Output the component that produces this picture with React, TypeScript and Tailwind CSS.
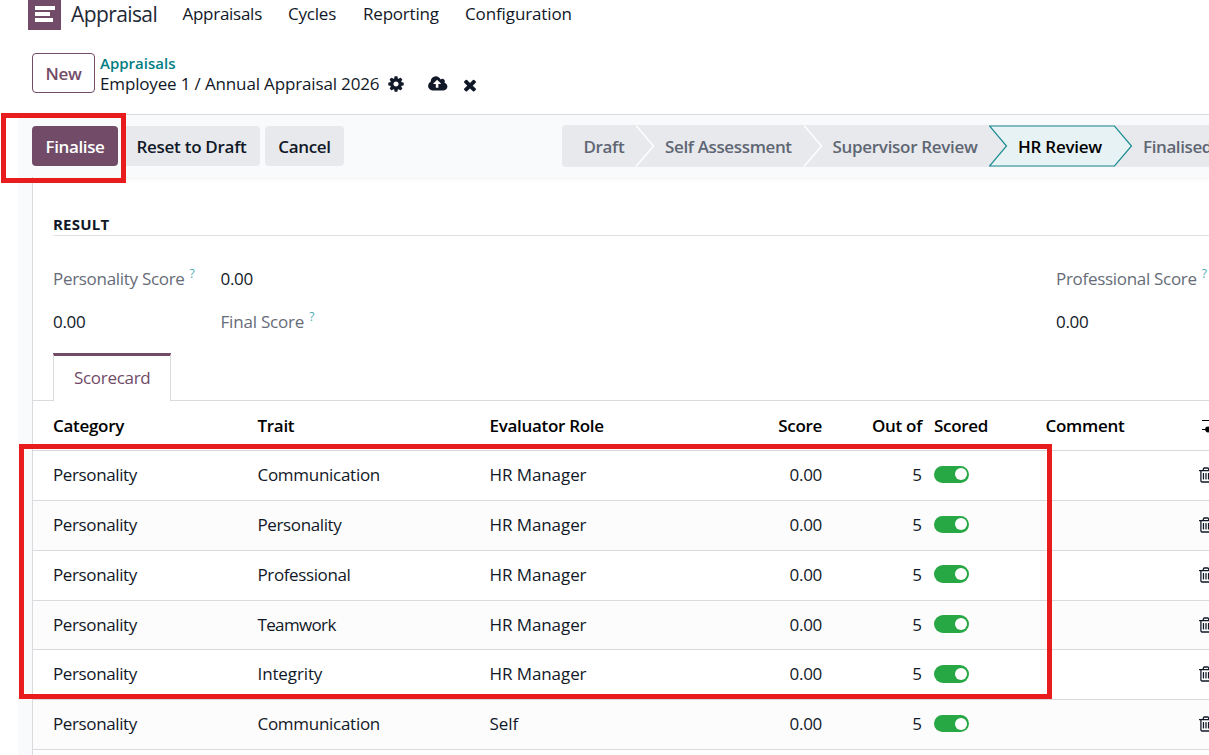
import type { ReactNode } from "react"

const nav = [
	{ label: "Appraisals", className: "w-[105.5px] tracking-[-0.27px]" },
	{ label: "Cycles", className: "w-[75px] tracking-[-0.2px]" },
	{ label: "Reporting", className: "w-[102px] tracking-[-0.2px]" },
	{ label: "Configuration", className: "tracking-[-0.12px]" },
]

const rows = [
	{ trait: "Communication", role: "HR Manager", spacing: "tracking-[-0.28px]" },
	{ trait: "Personality", role: "HR Manager", spacing: "tracking-[-0.38px]" },
	{ trait: "Professional", role: "HR Manager", spacing: "tracking-[-0.38px]" },
	{ trait: "Teamwork", role: "HR Manager", spacing: "tracking-[-0.65px]" },
	{ trait: "Integrity", role: "HR Manager", spacing: "tracking-[-0.12px]" },
	{ trait: "Communication", role: "Self", spacing: "tracking-[-0.28px]" },
]

const steps = [
	{ label: "Draft", className: "w-[74px] rounded-l-sm pl-[21.5px] tracking-[-0.35px]" },
	{ label: "Self Assessment", className: "w-[168px] pl-[29px] tracking-[-0.36px]" },
	{ label: "Supervisor Review", className: "w-[185px] pl-[28.5px] tracking-[-0.3px]" },
	{ label: "HR Review", className: "w-[125px] pl-[29px] tracking-[-0.25px]", active: true },
	{ label: "Finalised", className: "w-[120px] pl-[29px] tracking-[-0.4px]" },
]

const cols =
	"grid grid-cols-[204.5px_232px_232px_100.5px_100px_111.5px_165.5px_20px] items-center pl-5 whitespace-nowrap border-[#d8dadd]"

function Icon({ d, box = "0 0 1792 1792", className }: { d: string; box?: string; className: string }) {
	return (
		<svg viewBox={box} className={`shrink-0 ${className}`} fill="currentColor">
			<path d={d} />
		</svg>
	)
}

const cog =
	"M1152 896q0-106-75-181t-181-75-181 75-75 181 75 181 181 75 181-75 75-181zm512-109v222q0 12-8 23t-20 13l-185 28q-19 54-39 91 35 50 107 138 10 12 10 25t-9 23q-27 37-99 108t-94 71q-12 0-26-9l-138-108q-44 23-91 38-16 136-29 186-7 28-36 28h-222q-14 0-24.5-8.5t-11.5-21.5l-28-184q-49-16-90-37l-141 107q-10 9-25 9-14 0-25-11-126-114-165-168-7-10-7-23 0-12 8-23 15-21 51-66.5t54-70.5q-27-50-41-99l-183-27q-13-2-21-12.5t-8-23.5v-222q0-12 8-23t19-13l186-28q14-46 39-92-40-57-107-138-10-12-10-24 0-10 9-23 26-36 98.5-107.5t94.5-71.5q13 0 26 10l138 107q44-23 91-38 16-136 29-186 7-28 36-28h222q14 0 24.5 8.5t11.5 21.5l28 184q49 16 90 37l142-107q9-9 24-9 13 0 25 10 129 119 165 170 7 8 7 22 0 12-8 23-15 21-51 66.5t-54 70.5q26 50 41 98l183 28q13 2 21 12.5t8 23.5z"
const cloudUpload =
	"M1280 864q0-14-9-23l-352-352q-9-9-23-9t-23 9l-351 351q-10 12-10 24 0 14 9 23t23 9h224v352q0 13 9.5 22.5t22.5 9.5h192q13 0 22.5-9.5t9.5-22.5v-352h224q13 0 22.5-9.5t9.5-22.5zm640 288q0 159-112.5 271.5t-271.5 112.5h-1088q-185 0-316.5-131.5t-131.5-316.5q0-130 70-240t188-165q-2-30-2-43 0-212 150-362t362-150q156 0 285.5 87t188.5 231q71-62 166-62 106 0 181 75t75 181q0 76-41 138 130 31 213.5 135.5t83.5 238.5z"
const times =
	"M1490 1322q0 40-28 68l-136 136q-28 28-68 28t-68-28l-294-294-294 294q-28 28-68 28t-68-28l-136-136q-28-28-28-68t28-68l294-294-294-294q-28-28-28-68t28-68l136-136q28-28 68-28t68 28l294 294 294-294q28-28 68-28t68 28l136 136q28 28 28 68t-28 68l-294 294 294 294q28 28 28 68z"
const trash =
	"M704 736v576q0 14-9 23t-23 9h-64q-14 0-23-9t-9-23v-576q0-14 9-23t23-9h64q14 0 23 9t9 23zm256 0v576q0 14-9 23t-23 9h-64q-14 0-23-9t-9-23v-576q0-14 9-23t23-9h64q14 0 23 9t9 23zm256 0v576q0 14-9 23t-23 9h-64q-14 0-23-9t-9-23v-576q0-14 9-23t23-9h64q14 0 23 9t9 23zm128 724v-948h-896v948q0 22 7 40.5t14.5 27 10.5 8.5h832q3 0 10.5-8.5t14.5-27 7-40.5zm-672-1076h448l-48-117q-7-9-17-11h-317q-10 2-17 11zm928 32v64q0 14-9 23t-23 9h-96v948q0 83-47 143.5t-113 60.5h-832q-66 0-113-58.5t-47-141.5v-952h-96q-14 0-23-9t-9-23v-64q0-14 9-23t23-9h309l70-167q15-37 54-63t79-26h320q40 0 79 26t54 63l70 167h309q14 0 23 9t9 23z"

function Label({ children, className = "" }: { children: ReactNode; className?: string }) {
	return (
		<span className={`flex text-[#666c78] ${className}`}>
			{children}
			<sup className="top-0 ml-[5px] -mt-[5px] text-[12px] leading-6 tracking-normal text-[#4aabb5]">?</sup>
		</span>
	)
}

function StatusBar() {
	return (
		<div className="ml-[218px] flex h-[42px] shrink-0 text-[#5f6673]">
			{steps.map((s, i) => (
				<div key={s.label} className={`relative flex shrink-0 items-center bg-[#e7e9ed] pt-px ${s.className}`}>
					{i < 2 && (
						<svg className="absolute top-0 -right-[19px] z-10 h-[42px] w-5" fill="none">
							<path d="M1 0.5L18.5 21L1 41.5" stroke="#fff" strokeWidth="1.4" />
						</svg>
					)}
					{s.active && (
						<svg className="absolute top-0 left-0 z-10 h-[42px] w-[144px]">
							<path d="M0.5 1H125.5L142.5 21L125.5 41H0.5L17.5 21Z" fill="#e6f2f3" stroke="#1a8b90" strokeWidth="1.2" />
						</svg>
					)}
					<span className={s.active ? "relative z-20 text-black" : "relative"}>{s.label}</span>
				</div>
			))}
		</div>
	)
}

export default function App() {
	return (
		<div className="relative h-[755px] w-[1209px] overflow-hidden bg-white font-['Open_Sans',sans-serif] text-[17px] leading-6 text-[#111827]">
			<nav className="flex h-[45px] pl-7 whitespace-nowrap">
				<div className="flex h-[30px] w-[33px] flex-col gap-0.5 bg-[#714b67] pt-1.5 pl-[7px]">
					<i className="h-1 w-5 bg-white" />
					<i className="h-1 w-[15px] bg-white" />
					<i className="h-1 w-[18px] bg-white" />
				</div>
				<div className="ml-[10px] w-[111.5px] text-[21px] leading-[29px] tracking-[-0.6px] text-[#1f2937]">Appraisal</div>
				{nav.map(n => (
					<a key={n.label} className={`leading-[27px] ${n.className}`}>
						{n.label}
					</a>
				))}
			</nav>
			<header className="flex h-[69px] pt-2 pl-8">
				<button className="h-10 w-[63px] rounded border border-[#714b67] pt-px font-semibold tracking-[-0.3px] text-[#714b67]">
					New
				</button>
				<div className="ml-[5px] whitespace-nowrap">
					<div className="text-[15px] leading-5 font-semibold text-[#017e84]">Appraisals</div>
					<div className="flex h-[22px] items-center">
						<span className="w-[287px] tracking-[-0.15px]">Employee 1 / Annual Appraisal 2026</span>
						<Icon d={cog} className="size-[18px]" />
						<Icon d={cloudUpload} box="0 0 1920 1792" className="ml-[23px] h-[18px] w-[19.5px]" />
						<Icon d={times} className="mt-px ml-[13.5px] size-[18px]" />
					</div>
				</div>
			</header>
			<main className="ml-[18px] bg-[#f9fafb]">
				<section className="relative z-10 flex h-[63px] items-center border-t border-[#d8dadd] bg-[#f9fafb] pl-[14px] font-semibold whitespace-nowrap shadow-[14px_3px_4px_rgba(0,0,0,0.04)]">
					<button className="h-10 w-[86px] shrink-0 rounded bg-[#714b67] pt-px tracking-[-0.4px] text-white">Finalise</button>
					<button className="ml-1.5 h-10 w-[136px] shrink-0 rounded bg-[#e7e9ed] pt-px pr-[7px] pl-1.5 tracking-[-0.28px]">
						Reset to Draft
					</button>
					<button className="ml-[5px] h-10 w-[79px] shrink-0 rounded bg-[#e7e9ed] pt-px tracking-[-0.35px]">Cancel</button>
					<StatusBar />
				</section>
				<section className="ml-[14px] h-[580px] border-l border-[#d8dadd] bg-white pt-[35px] whitespace-nowrap">
					<h2 className="ml-5 h-6 border-b border-[#dfe1e4] text-[15px] font-bold tracking-[0.2px]">RESULT</h2>
					<div className="mt-[31px] ml-5 flex">
						<Label className="w-[167.5px] tracking-[-0.3px]">Personality Score</Label>
						<span className="w-[835.5px] tracking-[-0.3px]">0.00</span>
						<Label className="tracking-[-0.3px]">Professional Score</Label>
					</div>
					<div className="mt-[19px] ml-5 flex">
						<span className="w-[167.5px] tracking-[-0.3px]">0.00</span>
						<Label className="w-[835.5px] tracking-[-0.2px]">Final Score</Label>
						<span className="tracking-[-0.3px]">0.00</span>
					</div>
					<div className="mt-[19px] flex h-12 items-stretch">
						<div className="w-5 border-b border-[#d8dadd]" />
						<div className="w-[118px] border-x border-t-3 border-x-[#d8dadd] border-t-[#714b67] pt-[10px] pl-5 tracking-[-0.3px] text-[#714b67]">
							Scorecard
						</div>
						<div className="flex-1 border-b border-[#d8dadd]" />
					</div>
					<div className={`${cols} h-[50px] border-b pt-px font-semibold tracking-[-0.3px] text-black`}>
						<span>Category</span>
						<span>Trait</span>
						<span>Evaluator Role</span>
						<span className="text-right">Score</span>
						<span className="text-right">Out of</span>
						<span className="pl-3">Scored</span>
						<span className="pl-3">Comment</span>
						<svg className="ml-[3px] h-[18px] w-4" stroke="currentColor" strokeWidth="1.2">
							<path d="M0 3.5H16M0 12.5H16" />
							<circle cx="6" cy="12.5" r="2.3" fill="currentColor" />
						</svg>
					</div>
					{rows.map((r, i) => (
						<div key={i} className={`${cols} h-[49.86px] border-b pb-px ${i % 2 ? "bg-[#fcfcfc]" : ""}`}>
							<span className="tracking-[-0.38px]">Personality</span>
							<span className={r.spacing}>{r.trait}</span>
							<span className="tracking-[-0.08px]">{r.role}</span>
							<span className="text-right tracking-[-0.3px]">0.00</span>
							<span className="text-right">5</span>
							<span className="-mt-px ml-3 flex h-[17.5px] w-[35px] items-center justify-end rounded-full bg-[#28a745] pr-[2.5px]">
								<i className="size-3 rounded-full bg-white" />
							</span>
							<span />
							<Icon d={trash} box="192 0 1408 1792" className="h-[18px] w-[14px]" />
						</div>
					))}
				</section>
			</main>
			{/* highlight frames */}
			<div className="absolute top-[113px] left-px z-20 h-[70px] w-[125px] border-5 border-[#e81c1c]" />
			<div className="absolute top-[444px] left-[19px] z-20 h-[255px] w-[1033px] border-5 border-[#e81c1c]" />
		</div>
	)
}
